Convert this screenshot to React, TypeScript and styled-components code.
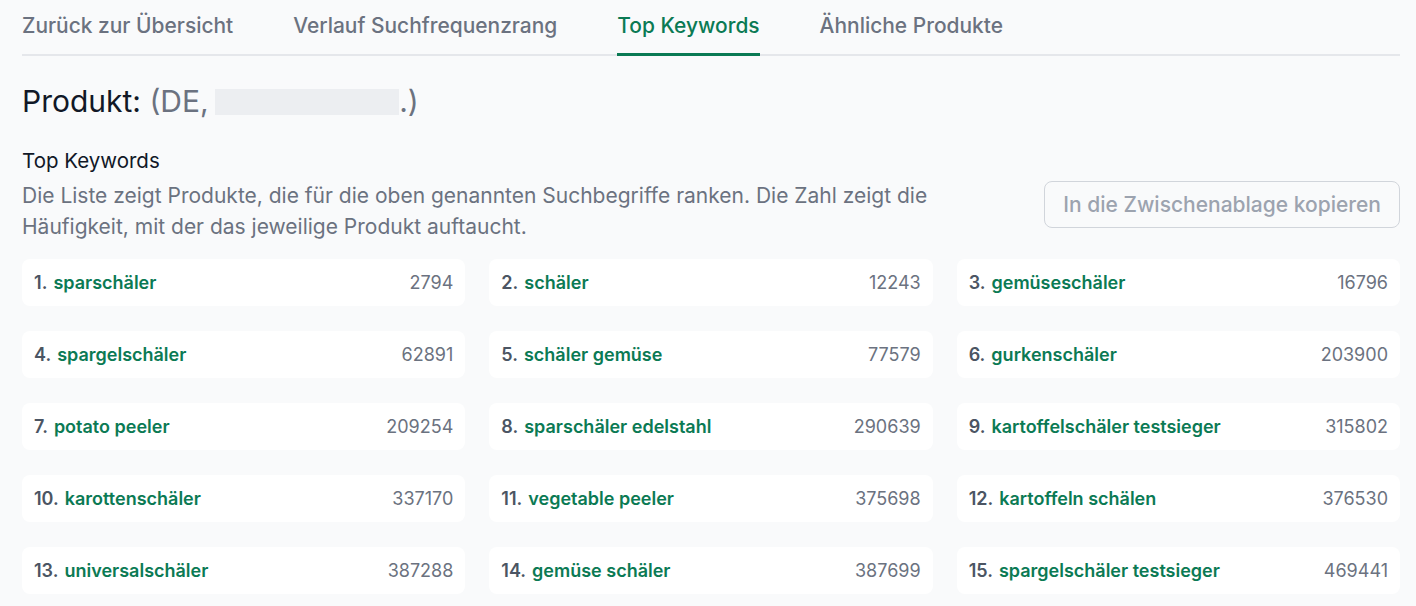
import React from "react";
import styled, { createGlobalStyle } from "styled-components";

const GlobalStyle = createGlobalStyle`
  html, body {
    margin: 0;
    padding: 0;
    background: #f9fafb;
    font-family: Inter, "Noto Sans", sans-serif;
  }
`;

const tabs = [
  { label: "Zurück zur Übersicht" },
  { label: "Verlauf Suchfrequenzrang" },
  { label: "Top Keywords", active: true },
  { label: "Ähnliche Produkte" },
];

const keywords: [string, number][] = [
  ["sparschäler", 2794],
  ["schäler", 12243],
  ["gemüseschäler", 16796],
  ["spargelschäler", 62891],
  ["schäler gemüse", 77579],
  ["gurkenschäler", 203900],
  ["potato peeler", 209254],
  ["sparschäler edelstahl", 290639],
  ["kartoffelschäler testsieger", 315802],
  ["karottenschäler", 337170],
  ["vegetable peeler", 375698],
  ["kartoffeln schälen", 376530],
  ["universalschäler", 387288],
  ["gemüse schäler", 387699],
  ["spargelschäler testsieger", 469441],
];

const App: React.FC = () => {
  return (
    <Page>
      <GlobalStyle />
      <TabBar>
        {tabs.map((t) => (
          <Tab key={t.label} $active={t.active}>
            {t.label}
          </Tab>
        ))}
      </TabBar>

      <Title>
        Produkt: <Muted>(DE, <Redacted />.)</Muted>
      </Title>

      <SectionTitle>Top Keywords</SectionTitle>
      <IntroRow>
        <Description>
          Die Liste zeigt Produkte, die für die oben genannten Suchbegriffe ranken. Die Zahl zeigt die
          Häufigkeit, mit der das jeweilige Produkt auftaucht.
        </Description>
        <CopyButton disabled>In die Zwischenablage kopieren</CopyButton>
      </IntroRow>

      <Grid>
        {keywords.map(([kw, count], i) => (
          <Card key={kw}>
            <Label>
              <Rank>{i + 1}.</Rank>
              <Keyword>{kw}</Keyword>
            </Label>
            <Count>{count}</Count>
          </Card>
        ))}
      </Grid>
    </Page>
  );
};

const Page = styled.div`
  padding: 11px 16px 0 22px;
  box-sizing: border-box;
  width: 1416px;
`;

const TabBar = styled.nav`
  display: flex;
  gap: 60px;
  border-bottom: 2px solid #e5e7eb;
`;

const Tab = styled.div<{ $active?: boolean }>`
  font-size: 20.95px;
  line-height: 30px;
  font-weight: 500;
  padding-bottom: 12px;
  margin-bottom: -2px;
  color: ${({ $active }) => ($active ? "#0b7a54" : "#6b7280")};
  border-bottom: 3px solid ${({ $active }) => ($active ? "#0b7a54" : "transparent")};
  cursor: pointer;
`;

const Title = styled.h1`
  margin: 27px 0 0;
  font-size: 30px;
  line-height: 36px;
  font-weight: 400;
  color: #111827;
`;

const Muted = styled.span`
  color: #6b7280;
`;

const Redacted = styled.span`
  display: inline-block;
  width: 184px;
  height: 26px;
  vertical-align: -3px;
  margin-left: -2px;
  background: #eceef1;
`;

const SectionTitle = styled.h2`
  margin: 28px 0 0;
  font-size: 20.5px;
  line-height: 28px;
  font-weight: 400;
  color: #111827;
`;

const IntroRow = styled.div`
  display: flex;
  justify-content: space-between;
  align-items: flex-start;
  margin-top: 5px;
`;

const Description = styled.p`
  margin: 0;
  width: 950px;
  font-size: 21px;
  line-height: 31px;
  color: #6b7280;
`;

const CopyButton = styled.button`
  font-family: inherit;
  font-size: 21px;
  font-weight: 500;
  color: #9ca3af;
  background: #f9fafb;
  border: 1px solid #d1d5db;
  border-radius: 8px;
  height: 47px;
  padding: 0 18px;
  margin-top: 1px;
`;

const Grid = styled.div`
  margin-top: 17px;
  display: grid;
  grid-template-columns: repeat(3, 1fr);
  column-gap: 24px;
  row-gap: 25px;
`;

const Card = styled.div`
  display: flex;
  align-items: center;
  justify-content: space-between;
  height: 47px;
  padding: 0 12px;
  background: #ffffff;
  border-radius: 8px;
  font-size: 18px;
`;

const Label = styled.span`
  display: flex;
  gap: 6px;
  font-weight: 600;
`;

const Rank = styled.span`
  color: #4b5563;
`;

const Keyword = styled.span`
  color: #0b7a54;
`;

const Count = styled.span`
  color: #6b7280;
`;

export default App;
